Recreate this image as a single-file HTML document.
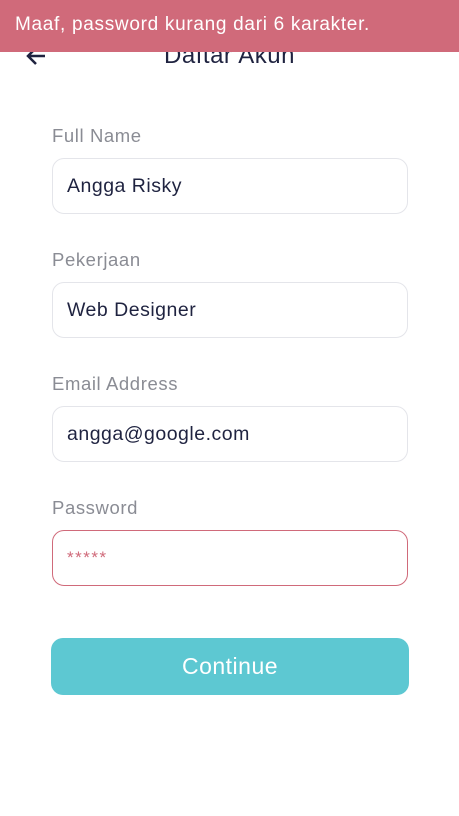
<!DOCTYPE html>
<html><head><style>
body{margin:0;width:459px;height:816px;background:#fff;font-family:"Liberation Sans",sans-serif;position:relative;overflow:hidden}
.title{position:absolute;top:42px;left:0;width:459px;text-align:center;font-size:24px;color:#1f2340;letter-spacing:0.5px}
.arrow{position:absolute;left:26px;top:40px}
.banner{position:absolute;left:0;top:0;width:459px;height:52px;background:#d06a7a;color:#fff;font-size:19px;line-height:50px;padding-left:15px;box-sizing:border-box;letter-spacing:0.7px}
.lbl{position:absolute;left:52px;font-size:18.5px;color:#8a8c94;letter-spacing:0.6px}
.inp{position:absolute;left:52px;width:356px;height:56px;box-sizing:border-box;border:1px solid #e4e5ea;border-radius:12px;font-size:19.5px;color:#1f2340;padding-left:14px;line-height:54px;letter-spacing:0.5px}
.btn{position:absolute;left:51px;top:638px;width:358px;height:57px;background:#5dc8d2;border-radius:12px;color:#fff;font-size:23px;text-align:center;line-height:57px;letter-spacing:0.5px}
</style></head><body>
<div class="title">Daftar Akun</div>
<svg class="arrow" width="22" height="26" viewBox="0 0 22 26"><path d="M19 16H3M10 8L2 16l8 8" stroke="#1f2340" stroke-width="2.5" fill="none"/></svg>
<div class="banner">Maaf, password kurang dari 6 karakter.</div>
<div class="lbl" style="top:125px">Full Name</div>
<div class="inp" style="top:158px">Angga Risky</div>
<div class="lbl" style="top:249px">Pekerjaan</div>
<div class="inp" style="top:282px">Web Designer</div>
<div class="lbl" style="top:373px">Email Address</div>
<div class="inp" style="top:406px">angga@google.com</div>
<div class="lbl" style="top:497px">Password</div>
<div class="inp" style="top:530px;border-color:#d06a7a;color:#d06a7a;font-size:17px;letter-spacing:1.5px">*****</div>
<div class="btn">Continue</div>
</body></html>
